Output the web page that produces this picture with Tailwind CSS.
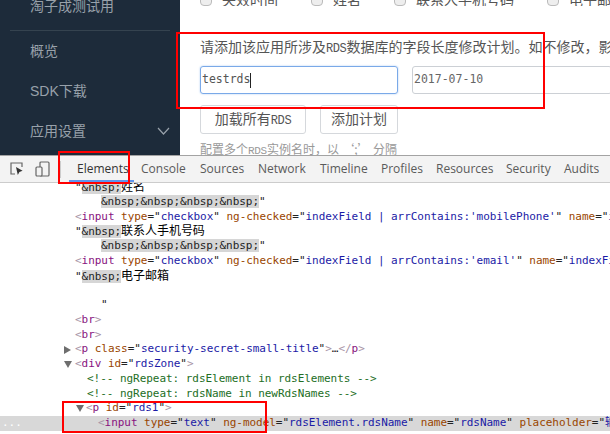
<!DOCTYPE html>
<html lang="en">
<head>
  <meta charset="UTF-8" />
  <meta name="viewport" content="width=device-width, initial-scale=1" />
  <title>RDS plan</title>
  <script src="https://cdn.jsdelivr.net/npm/@tailwindcss/browser@4"></script>
</head>
<body class="relative w-[610px] h-[434px] overflow-hidden bg-white font-['Liberation_Sans','Noto_Sans_CJK_SC',sans-serif]">

  <!-- Page -->
  <div class="flex h-[155px] overflow-hidden">
    <aside class="w-[180px] shrink-0 bg-[#1d2b3a] text-[14px] text-[#98a1aa]">
      <div class="mx-[10px] h-[31px] border-b border-[#35434f] pl-5 leading-[12px]">淘子成测试用</div>
      <div class="pl-[30px] pt-[10px] leading-5">概览</div>
      <div class="pl-[30px] pt-5 leading-5">SDK下载</div>
      <div class="flex items-center justify-between pl-[30px] pr-[10px] pt-5 leading-5">
        应用设置
        <svg width="13" height="8" viewBox="0 0 13 8" fill="none" stroke="#98a1aa" stroke-width="1.2"><path d="M1 1l5.5 6L12 1"/></svg>
      </div>
    </aside>
    <main class="min-w-0 flex-1 pl-5 text-[14px] text-[#555]">
      <div class="-mt-[6px] flex h-[12px] items-center overflow-hidden whitespace-nowrap">
        <span class="mr-[10px] h-[12px] w-[12px] shrink-0 rounded-sm border border-[#bbb] bg-[#eee]"></span>
        <span class="w-[89px] shrink-0 leading-[12px]">失效时间</span>
        <span class="mr-[10px] h-[12px] w-[12px] shrink-0 rounded-sm border border-[#bbb] bg-[#eee]"></span>
        <span class="w-[61px] shrink-0 leading-[12px]">姓名</span>
        <span class="mr-[10px] h-[12px] w-[12px] shrink-0 rounded-sm border border-[#bbb] bg-[#eee]"></span>
        <span class="w-[131px] shrink-0 leading-[12px]">联系人手机号码</span>
        <span class="mr-[10px] h-[12px] w-[12px] shrink-0 rounded-sm border border-[#bbb] bg-[#eee]"></span>
        <span class="leading-[12px]">电子邮箱</span>
      </div>
      <p class="mt-[31px] overflow-hidden whitespace-nowrap leading-5">请添加该应用所涉及<span class="font-['Liberation_Mono'] text-[12px] tracking-[-0.4px]">RDS</span>数据库的字段长度修改计划。如不修改，影响</p>
      <div class="mt-[7px] flex gap-[14px]">
        <div class="flex h-[28px] w-[198px] shrink-0 items-center rounded-[3px] border border-[#7aa9e8] pl-[1px] font-['DejaVu_Sans_Mono',monospace] text-[11.5px] shadow-[0_0_2px_#a8c8f0]">testrds<span class="h-[15px] w-px bg-[#222]"></span></div>
        <div class="flex h-[28px] w-[200px] shrink-0 items-center rounded-[3px] border border-[#ccd0d5] pl-[1px] font-['DejaVu_Sans_Mono',monospace] text-[11.5px] text-[#666]">2017-07-10</div>
      </div>
      <div class="mt-[11px] flex gap-[14px]">
        <button class="h-[29px] w-[106px] rounded-[3px] border border-[#d5d8dc] text-[14px]">加载所有<span class="font-['Liberation_Mono'] text-[12px] tracking-[-0.4px]">RDS</span></button>
        <button class="h-[29px] w-[78px] rounded-[3px] border border-[#d5d8dc] text-[14px]">添加计划</button>
      </div>
      <p class="mt-[7px] whitespace-nowrap text-[12px] leading-4 text-[#999]">配置多个<span class="font-['Liberation_Mono'] text-[11px] tracking-[-0.3px]">RDS</span>实例名时，以 <span class="font-['Noto_Sans_CJK_SC']">‘;’</span> 分隔</p>
    </main>
  </div>

  <!-- Devtools toolbar -->
  <div class="relative z-10 flex h-[28px] items-center border-y border-[#a3a3a3] border-b-[#ccc] bg-[#f3f3f3] font-['Open_Sans',sans-serif] text-[12px] text-[#5a5a5a]">
    <svg class="ml-[10px]" width="14" height="14" viewBox="0 0 14 14" fill="none"><path d="M5 12H1V1h11v4" stroke="#666" stroke-width="1.2"/><path d="M6 5l1.8 8 1.6-3 3.2-1.2z" fill="#333"/></svg>
    <svg class="ml-[11px]" width="15" height="16" viewBox="0 0 15 16" fill="none" stroke="#666" stroke-width="1.2"><rect x="5" y="1" width="9" height="14" rx="1"/><rect x="1" y="6" width="6" height="9" rx="1" fill="#f3f3f3"/></svg>
    <span class="ml-[10px] h-[17px] w-px bg-[#ccc]"></span>
    <span class="relative ml-[16px] w-[64px] text-[#333]">Elements<span class="absolute left-[-8px] top-[20px] h-[2px] w-[65px] bg-[#5e95ee]"></span></span>
    <span class="w-[59px]">Console</span>
    <span class="w-[58px]">Sources</span>
    <span class="w-[62px]">Network</span>
    <span class="w-[61px]">Timeline</span>
    <span class="w-[55px]">Profiles</span>
    <span class="w-[70px]">Resources</span>
    <span class="w-[58px]">Security</span>
    <span>Audits</span>
  </div>

  <!-- Elements tree -->
  <div class="-mt-[3px] whitespace-nowrap font-['DejaVu_Sans_Mono','Noto_Sans_CJK_SC',monospace] text-[11px] leading-[14.75px] tracking-[-0.04px] text-[#222] [&>div]:h-[14.75px]">
    <div class="pl-[75px]">"<span class="bg-[#d6d6d6]">&amp;nbsp;</span><span class="text-[12px] text-black">姓名</span></div>
    <div class="pl-[101px]"><span class="bg-[#d6d6d6]">&amp;nbsp;&amp;nbsp;&amp;nbsp;&amp;nbsp;</span>"</div>
    <div class="pl-[75px]"><span class="text-[#a894a6]">&lt;</span><span class="text-[#881280]">input</span> <span class="text-[#994500]">type</span>="<span class="text-[#1a1aa6]">checkbox</span>" <span class="text-[#994500]">ng-checked</span>="<span class="text-[#1a1aa6]">indexField | arrContains:'mobilePhone'</span>" <span class="text-[#994500]">name</span>="<span class="text-[#1a1aa6]">indexField</span>"</div>
    <div class="pl-[75px]">"<span class="bg-[#d6d6d6]">&amp;nbsp;</span><span class="text-[12px] text-black">联系人手机号码</span></div>
    <div class="pl-[101px]"><span class="bg-[#d6d6d6]">&amp;nbsp;&amp;nbsp;&amp;nbsp;&amp;nbsp;</span>"</div>
    <div class="pl-[75px]"><span class="text-[#a894a6]">&lt;</span><span class="text-[#881280]">input</span> <span class="text-[#994500]">type</span>="<span class="text-[#1a1aa6]">checkbox</span>" <span class="text-[#994500]">ng-checked</span>="<span class="text-[#1a1aa6]">indexField | arrContains:'email'</span>" <span class="text-[#994500]">name</span>="<span class="text-[#1a1aa6]">indexField</span>"</div>
    <div class="pl-[75px]">"<span class="bg-[#d6d6d6]">&amp;nbsp;</span><span class="text-[12px] text-black">电子邮箱</span></div>
    <div></div>
    <div class="pl-[101px]">"</div>
    <div class="pl-[75px] text-[#a894a6]">&lt;<span class="text-[#881280]">br</span>&gt;</div>
    <div class="pl-[75px] text-[#a894a6]">&lt;<span class="text-[#881280]">br</span>&gt;</div>
    <div class="flex items-center pl-[64px]">
      <span class="mr-[4px] h-0 w-0 border-y-[4px] border-l-[7px] border-y-transparent border-l-[#6e6e6e]"></span>
      <span><span class="text-[#a894a6]">&lt;</span><span class="text-[#881280]">p</span> <span class="text-[#994500]">class</span>="<span class="text-[#1a1aa6]">security-secret-small-title</span>"<span class="text-[#a894a6]">&gt;</span>…<span class="text-[#a894a6]">&lt;/</span><span class="text-[#881280]">p</span><span class="text-[#a894a6]">&gt;</span></span>
    </div>
    <div class="flex items-center pl-[64px]">
      <span class="mr-[3px] h-0 w-0 border-x-[4px] border-t-[7px] border-x-transparent border-t-[#6e6e6e]"></span>
      <span><span class="text-[#a894a6]">&lt;</span><span class="text-[#881280]">div</span> <span class="text-[#994500]">id</span>="<span class="text-[#1a1aa6]">rdsZone</span>"<span class="text-[#a894a6]">&gt;</span></span>
    </div>
    <div class="pl-[87px] text-[#236e25]">&lt;!-- ngRepeat: rdsElement in rdsElements --&gt;</div>
    <div class="pl-[87px] text-[#236e25]">&lt;!-- ngRepeat: rdsName in newRdsNames --&gt;</div>
    <div class="flex items-center pl-[76px]">
      <span class="mr-[2px] h-0 w-0 border-x-[4px] border-t-[7px] border-x-transparent border-t-[#6e6e6e]"></span>
      <span><span class="text-[#a894a6]">&lt;</span><span class="text-[#881280]">p</span> <span class="text-[#994500]">id</span>="<span class="text-[#1a1aa6]">rds1</span>"<span class="text-[#a894a6]">&gt;</span></span>
    </div>
    <div class="relative bg-[#d8d8d8] pl-[98px]">
      <span class="absolute left-[2px] top-0 text-white">...</span>
      <span class="text-[#a894a6]">&lt;</span><span class="text-[#881280]">input</span> <span class="text-[#994500]">type</span>="<span class="text-[#1a1aa6]">text</span>" <span class="text-[#994500]">ng-model</span>="<span class="text-[#1a1aa6]">rdsElement.rdsName</span>" <span class="text-[#994500]">name</span>="<span class="text-[#1a1aa6]">rdsName</span>" <span class="text-[#994500]">placeholder</span>="<span class="text-[#1a1aa6]">输入</span></div>
  </div>

  <!-- Red annotation boxes -->
  <div class="absolute z-20 left-[176px] top-[32px] h-[77px] w-[369px] border-2 border-[#f00]"></div>
  <div class="absolute z-20 left-[58px] top-[151px] h-[33px] w-[72px] border-2 border-[#f00]"></div>
  <div class="absolute z-20 left-[62px] top-[401px] h-[32px] w-[205px] border-2 border-[#f00]"></div>
</body>
</html>
